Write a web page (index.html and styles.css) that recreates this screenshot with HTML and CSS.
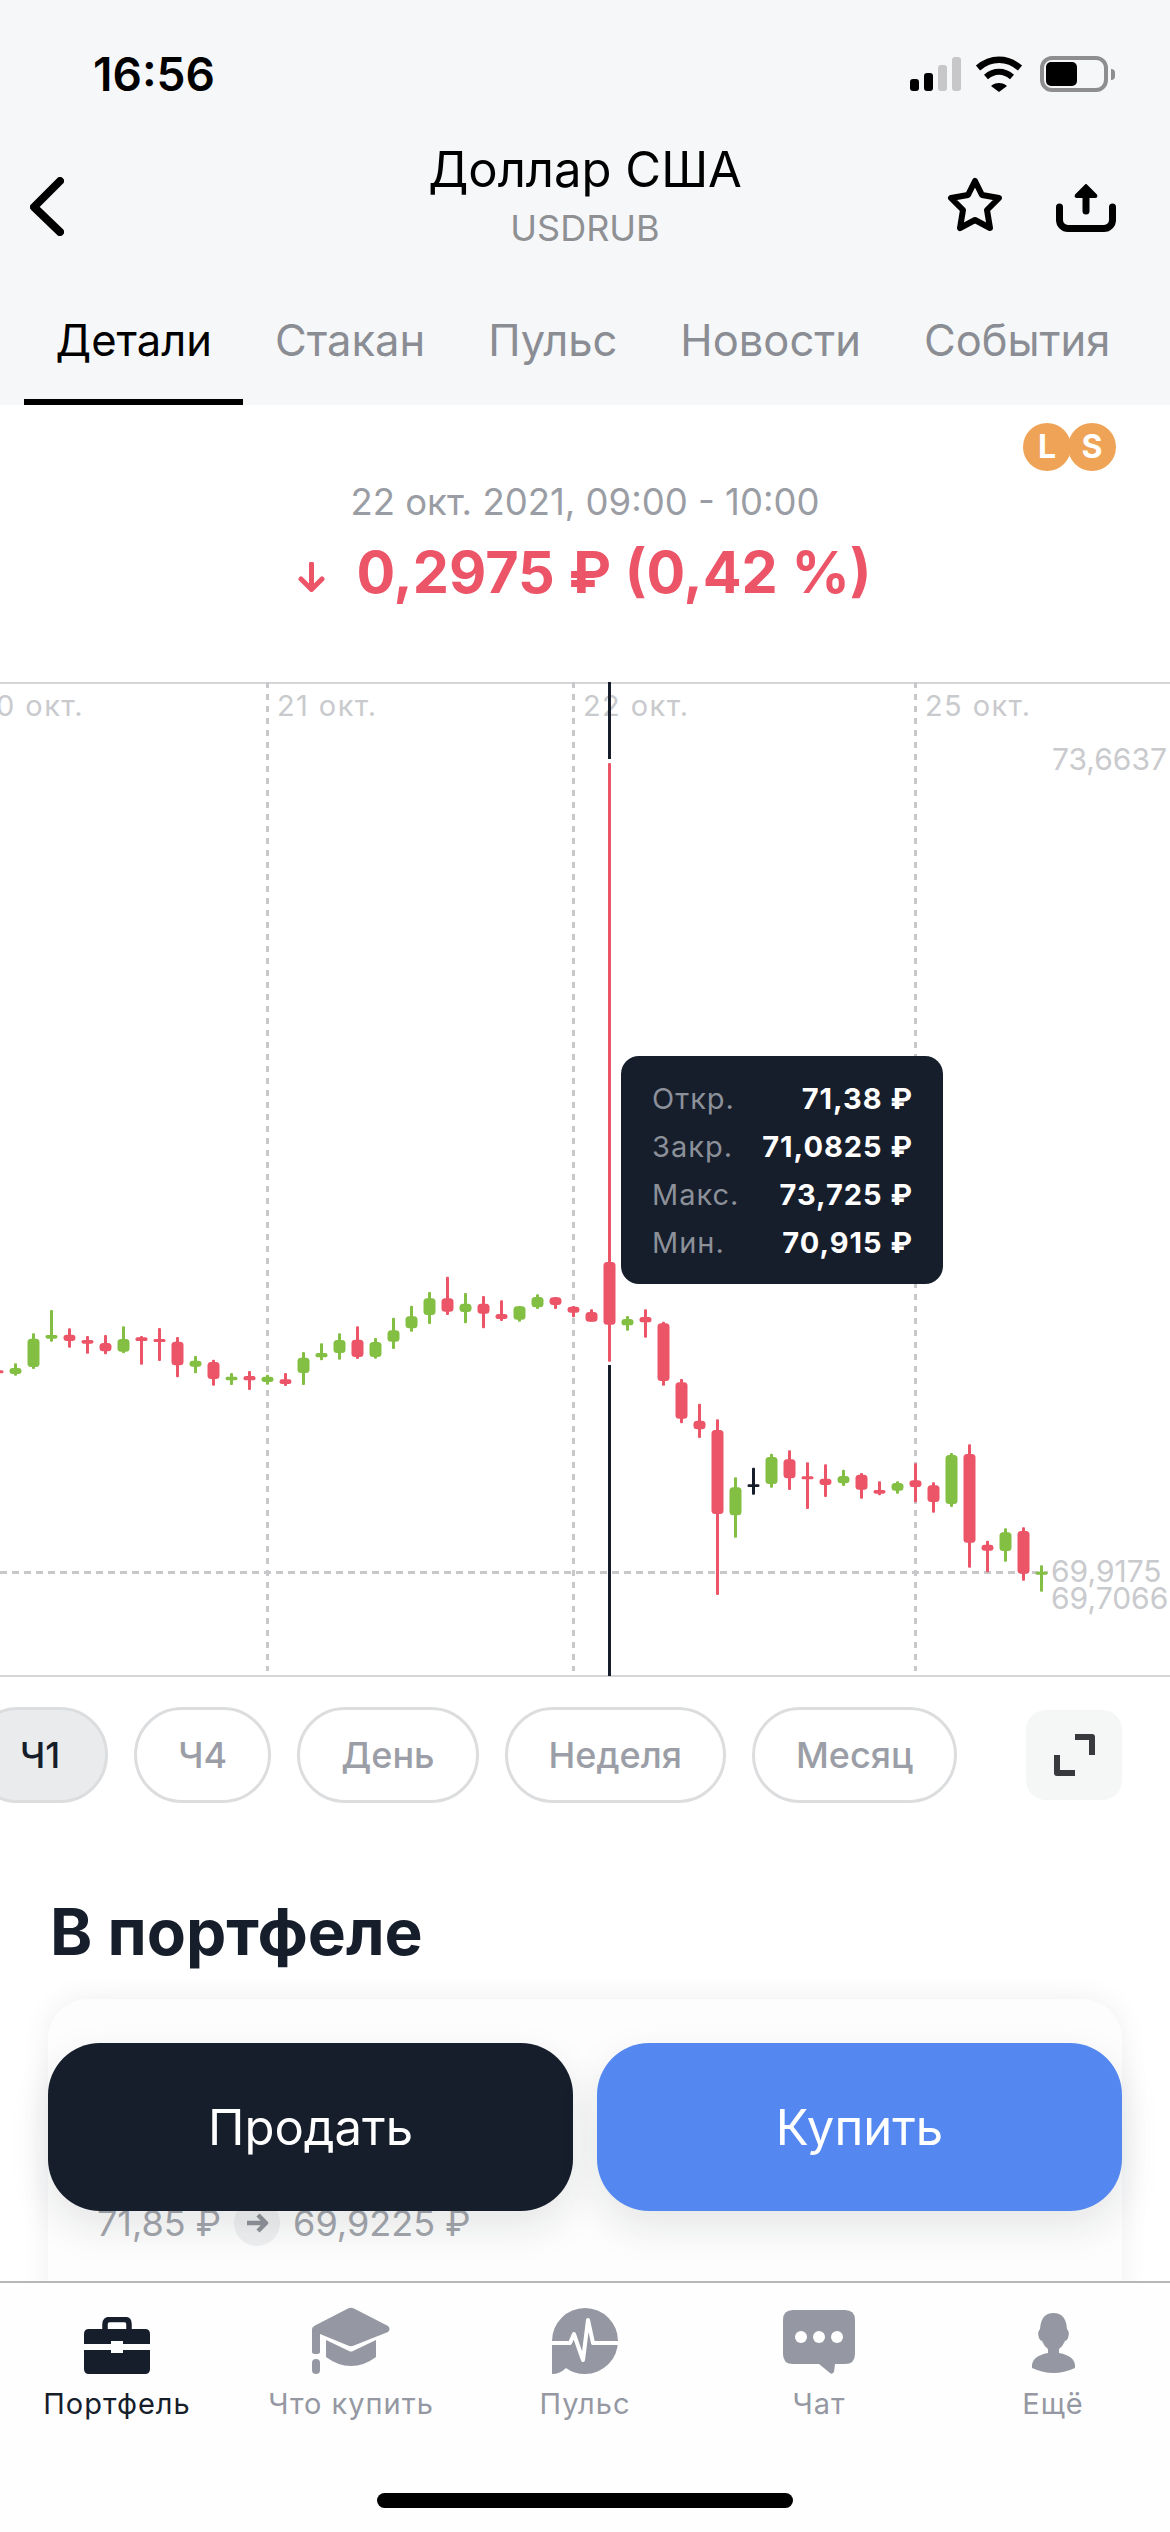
FILE: index.html
```html
<!DOCTYPE html>
<html lang="ru">
<head>
    <meta charset="UTF-8">
    <meta name="viewport" content="width=device-width, initial-scale=1.0">
    <title>Доллар США</title>
    <link rel="stylesheet" href="styles.css">
</head>
<body>
    <div class="screen">
        <header class="top">
            <div class="status-bar">
                <span class="time">16:56</span>
                <div class="status-icons">
                    <div class="signal">
                        <i class="bar bar-1"></i>
                        <i class="bar bar-2"></i>
                        <i class="bar bar-3"></i>
                        <i class="bar bar-4"></i>
                    </div>
                    <svg class="wifi" width="48" height="36" viewBox="0 0 48 36">
                        <path d="M3 12 C16 1 32 1 45 12" fill="none" stroke="#000" stroke-width="6.5"/>
                        <path d="M11 21 C19 14 29 14 37 21" fill="none" stroke="#000" stroke-width="6"/>
                        <path d="M16 30 C20 26 28 26 32 30 L24 36 Z" fill="#000"/>
                    </svg>
                    <div class="battery"><div class="battery-level"></div></div>
                    <div class="battery-nub"></div>
                </div>
            </div>

            <div class="nav">
                <svg class="back" width="34" height="59" viewBox="0 0 34 59">
                    <path d="M30 4 L4 30 L30 55" fill="none" stroke="#000" stroke-width="8" stroke-linecap="round" stroke-linejoin="round"/>
                </svg>
                <div class="nav-title">
                    <h1>Доллар США</h1>
                    <p>USDRUB</p>
                </div>
                <div class="nav-actions">
                    <svg width="56" height="55" viewBox="0 0 56 55">
                        <path d="M28 4 L35 18 L52 21 L40 33 L43 51 L28 43 L13 51 L16 33 L4 21 L21 18 Z" fill="none" stroke="#000" stroke-width="6" stroke-linejoin="round"/>
                    </svg>
                    <svg width="60" height="48" viewBox="0 0 60 48">
                        <path d="M3.5 23 V36 A8.5 8.5 0 0 0 12 44.5 H48 A8.5 8.5 0 0 0 56.5 36 V23" fill="none" stroke="#000" stroke-width="7" stroke-linecap="round"/>
                        <path d="M30 10 V27" fill="none" stroke="#000" stroke-width="7" stroke-linecap="round"/>
                        <path d="M30 1 L40 11 Q41 13 39 13 H21 Q19 13 20 11 Z" fill="#000" stroke="#000" stroke-width="2" stroke-linejoin="round"/>
                    </svg>
                </div>
            </div>

            <nav class="tabs">
                <a class="tab active">Детали</a>
                <a class="tab">Стакан</a>
                <a class="tab">Пульс</a>
                <a class="tab">Новости</a>
                <a class="tab">События</a>
            </nav>
        </header>

        <section class="quote">
            <div class="badges">
                <span class="badge">L</span>
                <span class="badge">S</span>
            </div>
            <p class="quote-date">22 окт. 2021, 09:00 - 10:00</p>
            <div class="quote-change">
                <svg width="27" height="30" viewBox="0 0 27 30">
                    <path d="M13.5 2 V27 M3 17 L13.5 27.5 L24 17" fill="none" stroke="#ec5468" stroke-width="5" stroke-linecap="round" stroke-linejoin="round"/>
                </svg>
                <span>0,2975 ₽ (0,42 %)</span>
            </div>
        </section>

        <section class="chart">
            <svg class="chart-canvas" width="1170" height="994" viewBox="0 0 1170 994">
                <g class="grid-lines">
                    <path class="grid-days" d="M267.5 0 V989 M573.5 0 V989 M915.5 0 V989"/>
                    <path class="grid-level" d="M0 890.5 H1048"/>
                </g>
                <g class="chart-labels">
                    <text x="-23" y="34">20 окт.</text>
                    <text x="277" y="34">21 окт.</text>
                    <text x="583" y="34">22 окт.</text>
                    <text x="925" y="34">25 окт.</text>
                    <text class="price-label" x="1052" y="88">73,6637</text>
                    <text class="price-label" x="1051" y="900">69,9175</text>
                    <text class="price-label" x="1051" y="927">69,7066</text>
                </g>
                <path class="cursor" d="M609.5 0 V77 M609.5 683 V994"/>
                <g id="candles"></g>
            </svg>
            <div class="chart-tooltip">
                <div class="tooltip-row"><span>Откр.</span><b>71,38 ₽</b></div>
                <div class="tooltip-row"><span>Закр.</span><b>71,0825 ₽</b></div>
                <div class="tooltip-row"><span>Макс.</span><b>73,725 ₽</b></div>
                <div class="tooltip-row"><span>Мин.</span><b>70,915 ₽</b></div>
            </div>
        </section>

        <div class="ranges">
            <button class="range active">Ч1</button>
            <button class="range">Ч4</button>
            <button class="range">День</button>
            <button class="range">Неделя</button>
            <button class="range">Месяц</button>
            <button class="expand">
                <svg width="41" height="42" viewBox="0 0 41 42">
                    <path d="M21 3 H38 V21 M3 21 V39 H21" fill="none" stroke="#37393d" stroke-width="6" stroke-linejoin="round"/>
                </svg>
            </button>
        </div>

        <section class="portfolio">
            <h2>В портфеле</h2>
            <div class="card">
                <div class="price-path">
                    <span>71,85 ₽</span>
                    <span class="path-arrow">
                        <svg width="24" height="22" viewBox="0 0 24 22">
                            <path d="M2 11 H21 M13 3 L21 11 L13 19" fill="none" stroke="#8f9299" stroke-width="4.5" stroke-linejoin="round"/>
                        </svg>
                    </span>
                    <span>69,9225 ₽</span>
                </div>
            </div>
        </section>

        <div class="actions">
            <button class="action sell">Продать</button>
            <button class="action buy">Купить</button>
        </div>

        <footer class="tabbar">
            <a class="tabbar-item active">
                <span class="tabbar-icon">
                    <svg width="66" height="57" viewBox="0 0 66 57">
                        <path d="M21 13 V7 Q21 2.500 25.500 2.500 H40.500 Q45 2.500 45 7 V13" fill="none" stroke="#161d2b" stroke-width="5.500"/>
                        <path d="M5 12 H61 Q66 12 66 17 V27 H39 V24 H27 V27 H0 V17 Q0 12 5 12 Z" fill="#161d2b"/>
                        <path d="M0 33 H27 V36 H39 V33 H66 V52 Q66 57 61 57 H5 Q0 57 0 52 Z" fill="#161d2b"/>
                    </svg>
                </span>
                <span>Портфель</span>
            </a>
            <a class="tabbar-item">
                <span class="tabbar-icon">
                    <svg width="79" height="67" viewBox="0 0 79 67">
                        <path d="M36 1.500 Q39 0 42 1.500 L76 19 Q79 22 76 25 L42 38.500 Q39 40 36 38.500 L8 27 V45 Q8 47 4 47 Q0 47 0 45 V22 Q0 20 3 18.500 Z" fill="#9598a2"/>
                        <path d="M14 33 L37 44 Q39 45 41 44 L64 33 V50 Q52 59 39 59 Q26 59 14 50 Z" fill="#9598a2"/>
                        <rect x="0" y="52" width="8" height="15" rx="4" fill="#9598a2"/>
                    </svg>
                </span>
                <span>Что купить</span>
            </a>
            <a class="tabbar-item">
                <span class="tabbar-icon">
                    <svg width="66" height="66" viewBox="0 0 66 66">
                        <path d="M0 33 A33 33 0 1 1 33 66 Q22 66 14 60 Q8 66 0 66 Z" fill="#9598a2"/>
                        <path d="M-1 35 H18 L22 26 L25 35 L31 52 L36 12 L41 35 H67" fill="none" stroke="#fff" stroke-width="4" stroke-linejoin="round"/>
                    </svg>
                </span>
                <span>Пульс</span>
            </a>
            <a class="tabbar-item">
                <span class="tabbar-icon">
                    <svg width="72" height="66" viewBox="0 0 72 66">
                        <path d="M10 2 H62 Q72 2 72 12 V46 Q72 56 62 56 H52 L51 64 Q49 67 47 65 L36 56 H10 Q0 56 0 46 V12 Q0 2 10 2 Z" fill="#9598a2"/>
                        <circle cx="18" cy="29" r="6" fill="#fff"/>
                        <circle cx="36" cy="29" r="6" fill="#fff"/>
                        <circle cx="54" cy="29" r="6" fill="#fff"/>
                    </svg>
                </span>
                <span>Чат</span>
            </a>
            <a class="tabbar-item">
                <span class="tabbar-icon">
                    <svg width="43" height="62" viewBox="0 0 43 62">
                        <path d="M21.500 1 Q34 1 35 17 Q38 20 36 26 Q35 29 33 29 Q31 34 27 37 V41 Q43 44 43 54 V56 Q32 61 21.500 61 Q11 61 0 56 V54 Q0 44 16 41 V37 Q12 34 10 29 Q8 29 7 26 Q5 20 8 17 Q9 1 21.500 1 Z" fill="#9598a2"/>
                    </svg>
                </span>
                <span>Ещё</span>
            </a>
            <div class="home-indicator"></div>
        </footer>
    </div>

    <script>
        // wick top, wick bottom, body top, body bottom, colour - values measured at 1/3 px
        const G = '#83bf43', R = '#ec5468', K = '#161d2b';
        const candles = [
            [391, 400, 391, 400, R],
            [370, 407, 384, 402, G], [280, 387, 296, 381, G], [210, 305, 285, 296, G],
            [265, 323, 284, 303, R], [288, 341, 300, 311, R], [285, 343, 309, 334, R],
            [259, 340, 297, 335, G], [288, 374, 292, 303, R], [264, 363, 297, 306, R],
            [291, 412, 305, 376, R], [348, 400, 362, 380, G], [359, 437, 366, 417, R],
            [399, 435, 410, 421, G], [393, 450, 408, 421, R], [404, 434, 410, 426, G],
            [399, 438, 418, 432, R], [336, 435, 353, 399, G], [310, 361, 339, 352, G],
            [280, 359, 300, 339, G], [259, 357, 299, 351, R], [294, 356, 306, 351, G],
            [233, 327, 271, 305, G], [197, 275, 229, 265, G], [156, 252, 175, 225, G],
            [110, 225, 175, 215, R], [159, 250, 191, 216, G], [168, 265, 191, 221, R],
            [181, 243, 222, 237, R], [198, 245, 199, 239, G], [163, 207, 171, 202, G],
            [171, 207, 172, 195, R], [198, 232, 200, 218, R], [208, 245, 216, 245, R],
            [-1431, 365, 66, 254, R], [228, 272, 237, 256, G], [208, 293, 231, 247, R],
            [245, 437, 250, 423, R], [417, 550, 427, 536, R], [491, 594, 542, 568, R],
            [538, 1065, 570, 822, R], [712, 893, 742, 826, G], [683, 764, 733, 741, K],
            [641, 743, 651, 732, G], [631, 750, 658, 715, R], [667, 807, 709, 718, R],
            [673, 771, 716, 735, R], [689, 738, 708, 730, G], [699, 776, 704, 749, R],
            [724, 766, 750, 761, R], [724, 761, 729, 752, G], [670, 787, 721, 741, R],
            [727, 818, 736, 786, R], [639, 801, 645, 792, G], [613, 983, 642, 908, R],
            [902, 997, 914, 932, R], [865, 965, 877, 933, G], [862, 1022, 873, 1001, R],
            [976, 1055, 995, 1004, G]
        ];

        const toY = v => 558 + v / 3;
        const NS = 'http://www.w3.org/2000/svg';
        const group = document.getElementById('candles');

        function addRect(x, y, w, h, rx, fill) {
            const rect = document.createElementNS(NS, 'rect');
            rect.setAttribute('x', x);
            rect.setAttribute('y', y);
            rect.setAttribute('width', w);
            rect.setAttribute('height', h);
            rect.setAttribute('rx', rx);
            rect.setAttribute('fill', fill);
            group.appendChild(rect);
        }

        candles.forEach((c, i) => {
            const x = -3 + 18 * i;
            addRect(x - 1, toY(c[0]), 3, toY(c[1]) - toY(c[0]), 1, c[4]);
            const bodyH = toY(c[3]) - toY(c[2]);
            addRect(x - 5.5, toY(c[2]), 12, bodyH, Math.min(3.5, bodyH / 2), c[4]);
        });
    </script>
</body>
</html>
```

FILE: styles.css
```css
* {
    box-sizing: border-box;
}

body {
    margin: 0;
    font-family: Inter, "Noto Sans", sans-serif;
    color: #161d2b;
    background: #fff;
}

.screen {
    position: relative;
    width: 1170px;
    height: 2532px;
    overflow: hidden;
    background: #fff;
}

/* top bar */

.top {
    height: 405px;
    background: #f6f7f9;
}

.status-bar {
    display: flex;
    justify-content: space-between;
    align-items: center;
    height: 148px;
    padding: 0 55px 0 93px;
    margin-bottom: -8px;
}

.time {
    font-size: 46px;
    font-weight: 600;
    color: #000;
}

.status-icons {
    display: flex;
    align-items: center;
}

.signal {
    display: flex;
    align-items: flex-end;
    gap: 5px;
    height: 34px;
    margin-right: 14px;
}

.bar {
    display: block;
    width: 9px;
    border-radius: 3px;
    background: #000;
}

.bar-1 { height: 12px; }
.bar-2 { height: 18px; }
.bar-3 { height: 26px; background: #c7c7c9; }
.bar-4 { height: 34px; background: #c7c7c9; }

.wifi {
    margin-right: 17px;
}

.battery {
    width: 68px;
    height: 36px;
    padding: 2px;
    border: 4px solid #8e8e90;
    border-radius: 12px;
}

.battery-level {
    width: 31px;
    height: 24px;
    border-radius: 5px;
    background: #000;
}

.battery-nub {
    width: 4px;
    height: 11px;
    margin-left: 3px;
    border-radius: 0 4px 4px 0;
    background: #8e8e90;
}

.nav {
    display: grid;
    grid-template-columns: 1fr auto 1fr;
    align-items: start;
    height: 172px;
    padding: 0 54px;
}

.back {
    display: block;
    margin: 37px 0 0 -24px;
}

.nav-title {
    text-align: center;
}

.nav-title h1 {
    margin: 0;
    font-size: 49px;
    line-height: 60px;
    font-weight: 400;
    color: #000;
}

.nav-title p {
    margin: 5px 0 0;
    font-size: 36px;
    line-height: 46px;
    color: #8e9094;
}

.nav-actions {
    display: flex;
    justify-content: flex-end;
    align-items: flex-end;
    gap: 53px;
    margin-top: 37px;
}

.tabs {
    display: flex;
    height: 93px;
    padding-left: 24px;
}

.tab {
    height: 93px;
    padding: 0 31.5px;
    font-size: 43.5px;
    line-height: 56px;
    color: #8a8d93;
}

.tab.active {
    color: #000;
    border-bottom: 6px solid #000;
}

/* price of the selected candle */

.quote {
    position: relative;
    height: 277px;
    padding-top: 75px;
    text-align: center;
}

.badges {
    position: absolute;
    top: 18px;
    right: 54px;
    display: flex;
}

.badge {
    width: 48px;
    height: 48px;
    margin-left: -3px;
    border-radius: 50%;
    font-size: 32px;
    font-weight: 700;
    line-height: 48px;
    color: #fff;
    background: #efa357;
}

.quote-date {
    margin: 0;
    font-size: 36.5px;
    line-height: 44px;
    color: #9a9da4;
}

.quote-change {
    display: flex;
    justify-content: center;
    align-items: center;
    gap: 31px;
    margin-top: 13px;
    font-size: 57.5px;
    line-height: 70px;
    font-weight: 700;
    color: #ec5468;
}

.quote-change svg {
    margin-top: 10px;
}

/* chart */

.chart {
    position: relative;
    height: 995px;
    border-top: 2px solid #d6d6d8;
    border-bottom: 2px solid #d6d6d8;
}

.chart-canvas {
    display: block;
    margin-top: -2px;
    overflow: hidden;
}

.grid-lines path {
    fill: none;
    stroke: #c8c8ca;
    stroke-width: 3;
}

.grid-days {
    stroke-dasharray: 6 6;
}

.grid-level {
    stroke-dasharray: 7 5;
}

.chart-labels text {
    font-size: 29px;
    letter-spacing: 1.4px;
    fill: #c9cacd;
}

.chart-labels .price-label {
    font-size: 30px;
    letter-spacing: 0;
}

.cursor {
    fill: none;
    stroke: #161d2b;
    stroke-width: 3;
}

.chart-tooltip {
    position: absolute;
    top: 372px;
    left: 621px;
    width: 322px;
    height: 228px;
    padding: 19px 30px 0 31px;
    border-radius: 18px;
    background: #161d2b;
}

.tooltip-row {
    display: flex;
    justify-content: space-between;
    font-size: 29px;
    line-height: 48px;
    letter-spacing: 1px;
    color: #8b9099;
}

.tooltip-row b {
    font-weight: 700;
    color: #fff;
}

/* range switch */

.ranges {
    display: flex;
    align-items: center;
    gap: 26px;
    width: 1200px;
    height: 96px;
    margin: 30px 0 0 -30px;
    padding-right: 48px;
}

.range {
    height: 96px;
    padding: 0 41px;
    border: 3px solid #dcdddf;
    border-radius: 48px;
    font-family: inherit;
    font-size: 36px;
    font-weight: 500;
    color: #9b9ea6;
    background: #fff;
}

.range.active {
    padding-left: 47px;
    padding-right: 45px;
    color: #161d2b;
    background: #e9ebed;
}

.expand {
    display: flex;
    justify-content: center;
    align-items: center;
    width: 96px;
    height: 90px;
    margin-left: auto;
    padding: 0;
    border: none;
    border-radius: 20px;
    background: #f5f6f6;
}

/* portfolio block, mostly covered by the buttons */

.portfolio {
    padding: 91px 48px 0;
}

.portfolio h2 {
    margin: 0 0 1px 2px;
    font-size: 64px;
    line-height: 75px;
    font-weight: 700;
}

.card {
    height: 320px;
    margin-top: 30px;
    padding: 201px 0 0 49px;
    border-radius: 40px;
    background: #fdfdfd;
    box-shadow: 0 0 30px rgba(22, 29, 43, 0.07);
}

.price-path {
    display: flex;
    align-items: center;
    font-size: 36px;
    line-height: 46px;
    color: #a3a6ac;
}

.path-arrow {
    display: flex;
    justify-content: center;
    align-items: center;
    width: 46px;
    height: 46px;
    margin: 0 13px;
    border-radius: 50%;
    background: #eff0f1;
}

/* fixed bottom parts */

.actions {
    position: absolute;
    top: 2043px;
    left: 48px;
    right: 48px;
    display: flex;
    gap: 24px;
}

.action {
    flex: 1;
    height: 168px;
    border: none;
    border-radius: 52px;
    font-family: inherit;
    font-size: 49px;
    color: #fff;
    box-shadow: 0 16px 40px rgba(22, 29, 43, 0.1);
}

.sell {
    background: #161d2b;
}

.buy {
    background: #5488f0;
}

.tabbar {
    position: absolute;
    top: 2281px;
    left: 0;
    right: 0;
    bottom: 0;
    display: grid;
    grid-template-columns: repeat(5, 1fr);
    padding-top: 24px;
    border-top: 2px solid #b7b7b9;
    background: #fefefe;
}

.tabbar-item {
    display: flex;
    flex-direction: column;
    align-items: center;
    font-size: 29px;
    line-height: 36px;
    letter-spacing: 1px;
    color: #9598a2;
}

.tabbar-item.active {
    color: #161d2b;
}

.tabbar-icon {
    display: flex;
    justify-content: center;
    align-items: flex-end;
    height: 67px;
    margin-bottom: 12px;
}

.home-indicator {
    position: absolute;
    left: 377px;
    bottom: 24px;
    width: 416px;
    height: 15px;
    border-radius: 8px;
    background: #000;
}
```
